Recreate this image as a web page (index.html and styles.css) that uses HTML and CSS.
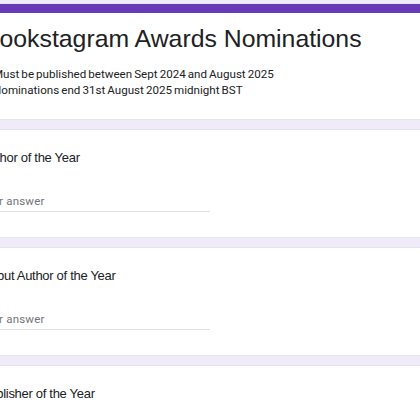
FILE: index.html
```html
<!DOCTYPE html>
<html lang="en">
<head>
<meta charset="utf-8">
<title>Bookstagram Awards Nominations</title>
<link rel="stylesheet" href="styles.css">
</head>
<body>
<main class="page">
  <section class="card header-card">
    <h1 class="form-title">Bookstagram Awards Nominations</h1>
    <p class="form-desc">Must be published between Sept 2024 and August 2025<br>Nominations end 31st August 2025 midnight BST</p>
  </section>
  <section class="card question">
    <div class="q-title">Author of the Year</div>
    <div class="answer"><span class="placeholder">Your answer</span></div>
  </section>
  <section class="card question">
    <div class="q-title">Debut Author of the Year</div>
    <div class="answer"><span class="placeholder">Your answer</span></div>
  </section>
  <section class="card question">
    <div class="q-title">Publisher of the Year</div>
    <div class="answer"><span class="placeholder">Your answer</span></div>
  </section>
</main>
</body>
</html>
```
FILE: styles.css
```css
html, body {
  margin: 0;
  padding: 0;
  background: #f0ebf8;
  overflow: hidden;
}
.page {
  margin-left: -43px;
  width: 520px;
  padding-top: 4px;
  display: flex;
  flex-direction: column;
  gap: 11px;
}
.card {
  background: #fff;
  padding: 0 24px;
  box-shadow: 0 0 0 1px #e6e2ee;
}
.header-card {
  border-top: 9px solid #673ab7;
  padding-top: 10px;
  padding-bottom: 21px;
}
.form-title {
  margin: 0 0 0 2px;
  font-family: "Liberation Sans", Arial, sans-serif;
  font-weight: 400;
  font-size: 24.8px;
  line-height: 32px;
  color: #202124;
}
.form-desc {
  margin: 11px 0 0 12px;
  font-family: Roboto, "Liberation Sans", sans-serif;
  font-size: 11.6px;
  line-height: 16px;
  word-spacing: -0.8px;
  color: #202124;
}
.question {
  padding-top: 18px;
  padding-bottom: 25px;
  height: 107px;
  box-sizing: border-box;
}
.q-title {
  font-family: "Liberation Sans", Arial, sans-serif;
  font-size: 13px;
  line-height: 20px;
  letter-spacing: -0.3px;
  color: #202124;
}
.answer {
  margin-top: 25px;
  width: 229px;
  padding-bottom: 2px;
  border-bottom: 1px solid #e0e0e0;
}
.placeholder {
  margin-left: -2px;
  font-family: Roboto, "Liberation Sans", sans-serif;
  font-size: 11.5px;
  line-height: 16px;
  letter-spacing: 0.2px;
  color: #70757a;
  display: block;
}
```
